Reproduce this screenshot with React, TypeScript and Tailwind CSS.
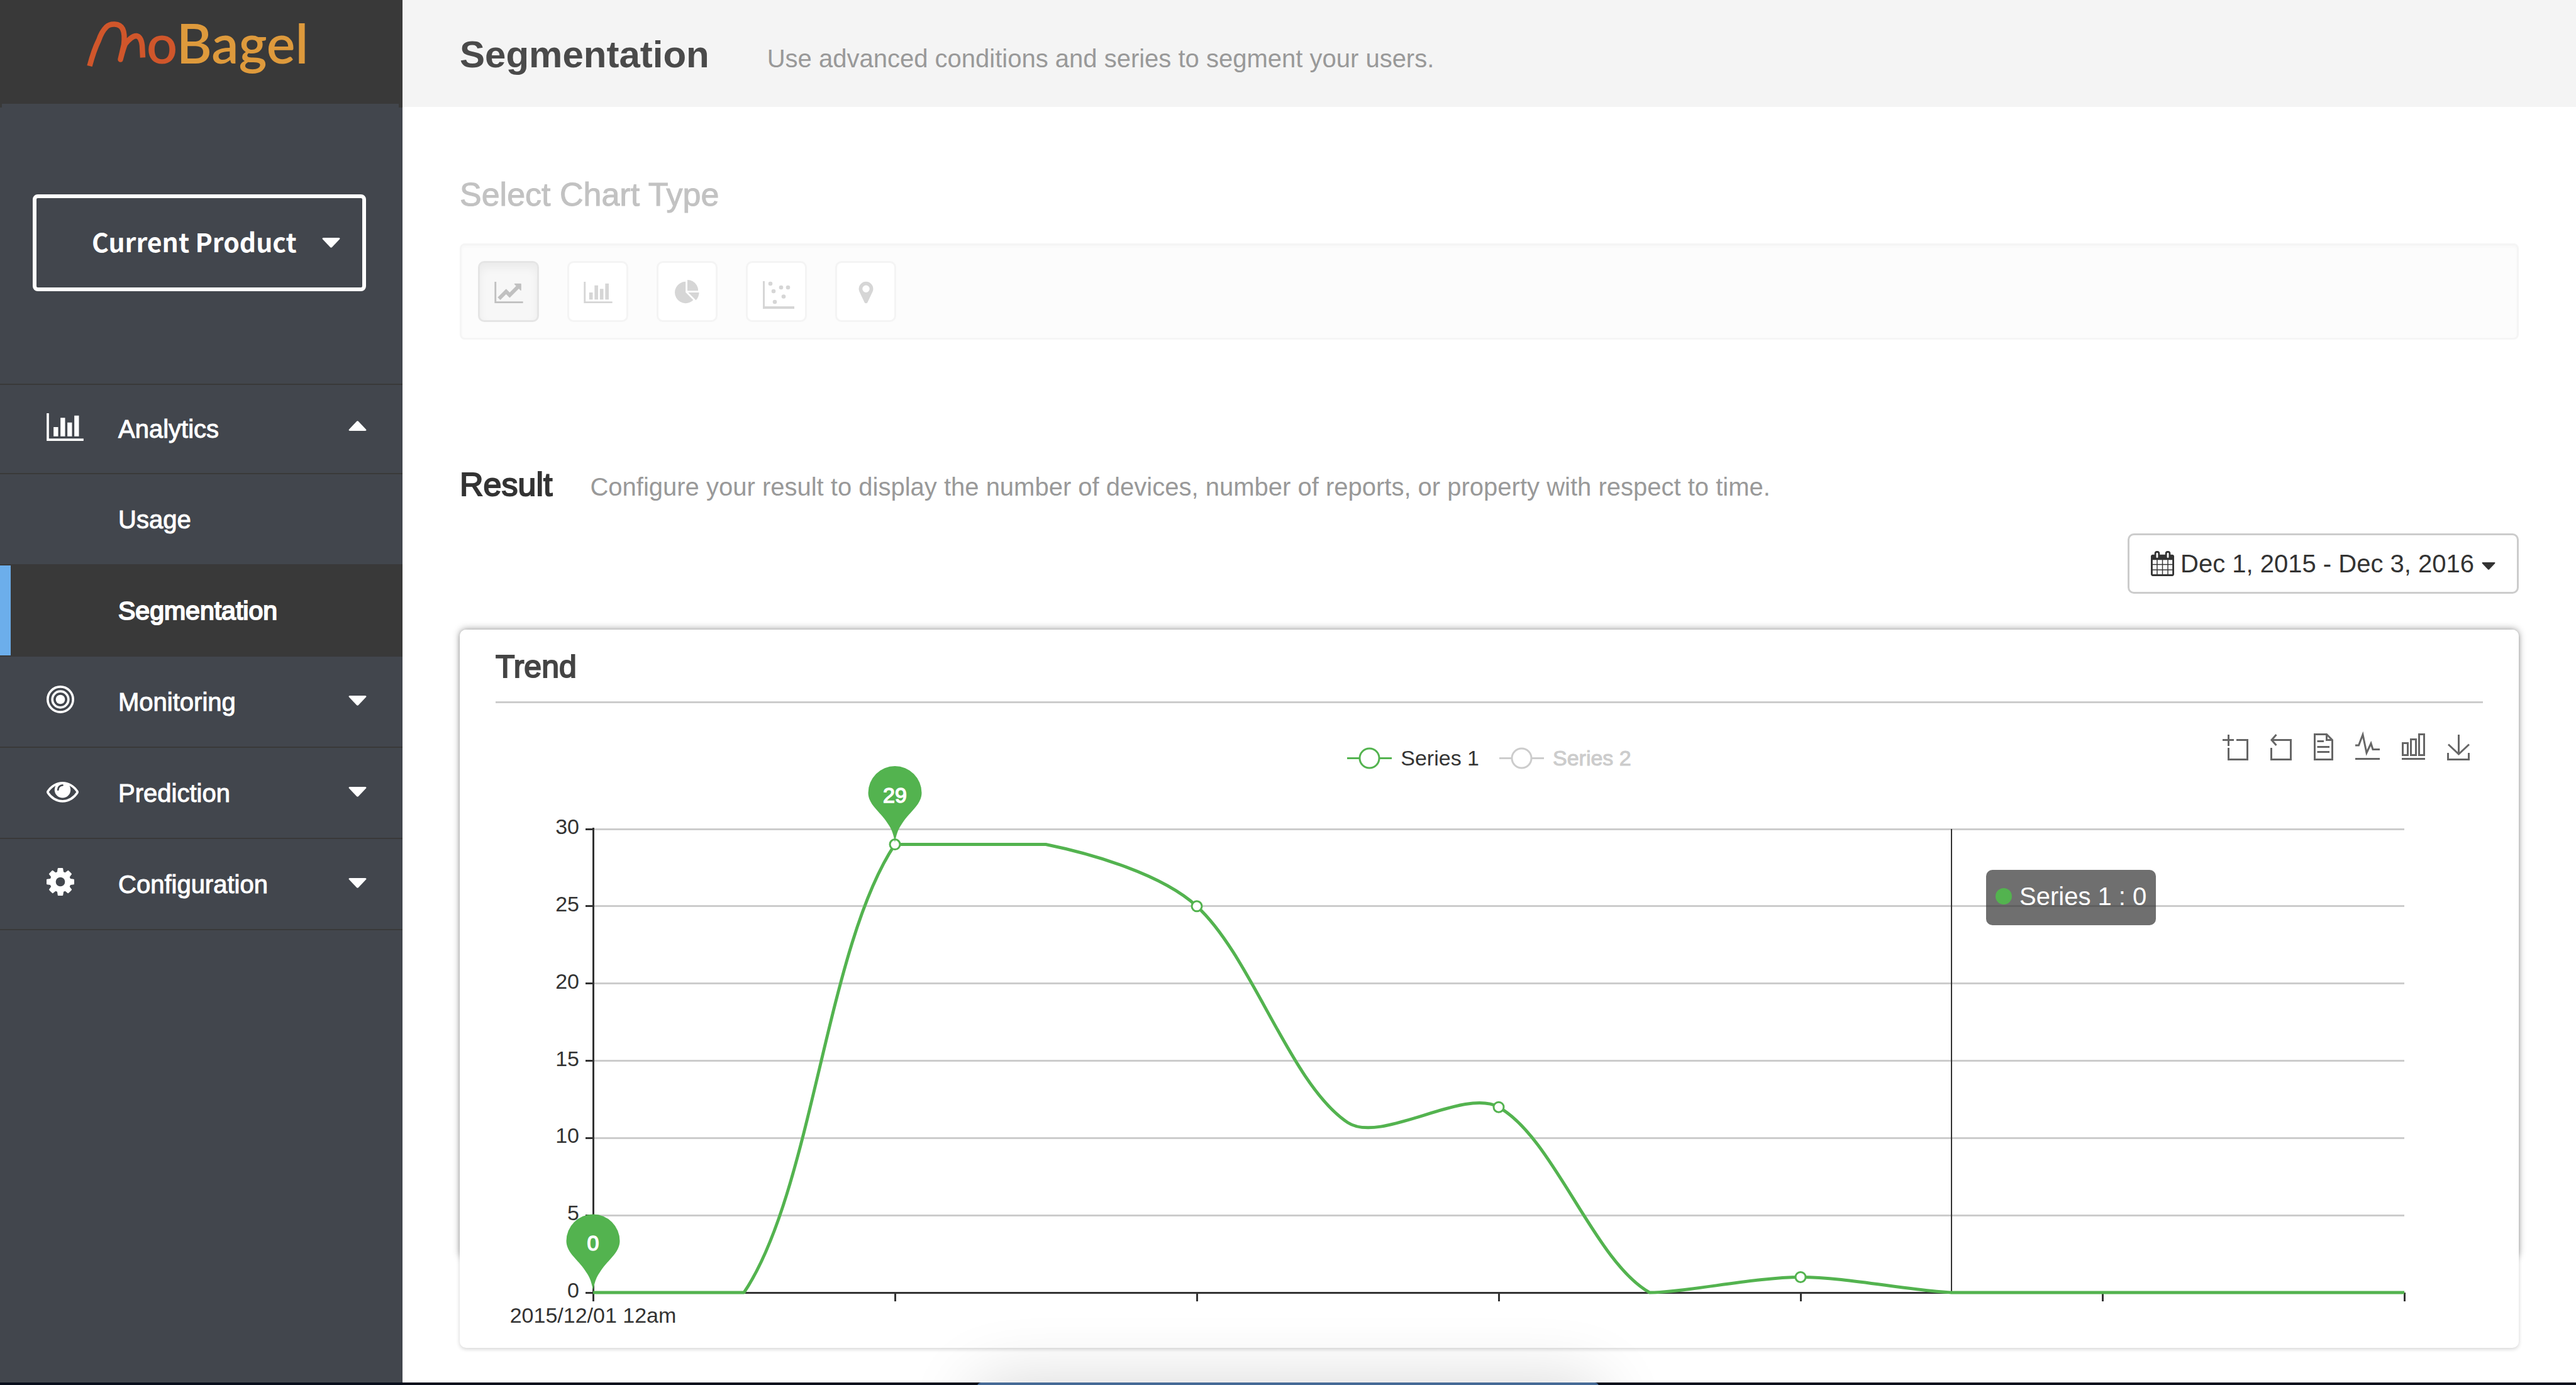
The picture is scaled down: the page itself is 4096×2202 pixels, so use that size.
import React from "react";

type IconProps = { className?: string };

function BarChartIcon({ className }: IconProps) {
  return (
    <svg viewBox="0 0 2048 1536" fill="currentColor" className={className} aria-hidden="true">
      <path d="M640 768v512h-256v-512h256zM1024 256v1024h-256v-1024h256zM2048 1408v128h-2048v-1536h128v1408h1920zM1408 512v768h-256v-768h256zM1792 128v1152h-256v-1152h256z" />
    </svg>
  );
}

function LineChartIcon({ className }: IconProps) {
  return (
    <svg viewBox="0 0 2048 1536" fill="currentColor" className={className} aria-hidden="true">
      <path d="M2048 1408v128h-2048v-1536h128v1408h1920zM1920 160v435q0 21-19.5 29.5t-35.5-7.5l-121-121-633 633q-10 10-23 10t-23-10l-233-233-416 416-192-192 585-585q10-10 23-10t23 10l233 233 464-464-121-121q-16-16-7.5-35.5t29.5-19.5h435q14 0 23 9t9 23z" />
    </svg>
  );
}

function PieChartIcon({ className }: IconProps) {
  return (
    <svg viewBox="0 0 1792 1792" fill="currentColor" className={className} aria-hidden="true">
      <path d="M768 890l546 546q-106 108-247.5 168t-298.5 60q-209 0-385.5-103t-279.5-279.5-103-385.5 103-385.5 279.5-279.5 385.5-103v762zM955 896h773q0 157-60 298.5t-168 247.5zM1664 768h-768v-768q209 0 385.5 103t279.5 279.5 103 385.5z" />
    </svg>
  );
}

function ScatterIcon({ className }: IconProps) {
  return (
    <svg viewBox="0 0 50 44" fill="currentColor" className={className} aria-hidden="true">
      <path d="M0 0h3v40h47v4H0z" />
      <circle cx="12" cy="4" r="3.3" />
      <circle cx="17" cy="16" r="3.3" />
      <circle cx="19" cy="33" r="3.3" />
      <circle cx="29" cy="10" r="3.3" />
      <circle cx="40" cy="10" r="3.3" />
      <circle cx="33" cy="24.5" r="3.3" />
    </svg>
  );
}

function MarkerIcon({ className }: IconProps) {
  return (
    <svg viewBox="0 0 1792 1792" fill="currentColor" className={className} aria-hidden="true">
      <path d="M1152 640q0-106-75-181t-181-75-181 75-75 181 75 181 181 75 181-75 75-181zM1408 640q0 109-33 179l-364 774q-16 33-47.5 52t-67.5 19-67.5-19-46.5-52l-365-774q-33-70-33-179 0-212 150-362t362-150 362 150 150 362z" />
    </svg>
  );
}

function BullseyeIcon({ className }: IconProps) {
  return (
    <svg viewBox="0 0 1536 1536" fill="none" stroke="currentColor" strokeWidth="128" className={className} aria-hidden="true">
      <circle cx="768" cy="768" r="256" fill="currentColor" stroke="none" />
      <circle cx="768" cy="768" r="448" />
      <circle cx="768" cy="768" r="704" />
    </svg>
  );
}

function EyeIcon({ className }: IconProps) {
  return (
    <svg viewBox="0 0 1792 1792" fill="currentColor" className={className} aria-hidden="true">
      <path d="M1664 960q-152-236-381-353 61 104 61 225 0 185-131.5 316.5t-316.5 131.5-316.5-131.5-131.5-316.5q0-121 61-225-229 117-381 353 133 205 333.5 326.5t434.5 121.5 434.5-121.5 333.5-326.5zM944 576q0-20-14-34t-34-14q-125 0-214.5 89.5t-89.5 214.5q0 20 14 34t34 14 34-14 14-34q0-86 61-147t147-61q20 0 34-14t14-34zM1792 960q0 34-20 69-140 230-376.5 368.5t-499.5 138.5-499.5-139-376.5-368q-20-35-20-69t20-69q140-229 376.5-368t499.5-139 499.5 139 376.5 368q20 35 20 69z" />
    </svg>
  );
}

function CogIcon({ className }: IconProps) {
  return (
    <svg viewBox="128 128 1536 1536" fill="currentColor" className={className} aria-hidden="true">
      <path d="M1152 896q0-106-75-181t-181-75-181 75-75 181 75 181 181 75 181-75 75-181zM1664 787v222q0 12-8 23t-20 13l-185 28q-19 54-39 91 35 50 107 138 10 12 10 25t-9 23q-27 37-99 108t-94 71q-12 0-26-9l-138-108q-44 23-91 38-16 136-29 186-7 28-36 28h-222q-14 0-24.5-8.5t-11.5-21.5l-28-184q-49-16-90-37l-141 107q-10 9-25 9-14 0-25-11-126-114-165-168-7-10-7-23 0-12 8-23 15-21 51-66.5t54-70.5q-27-50-41-99l-183-27q-13-2-21-12.5t-8-23.5v-222q0-12 8-23t19-13l186-28q14-46 39-92-40-57-107-138-10-12-10-24 0-10 9-23 26-36 98.5-107.5t94.5-71.5q13 0 26 10l138 107q44-23 91-38 16-136 29-186 7-28 36-28h222q14 0 24.5 8.5t11.5 21.5l28 184q49 16 90 37l142-107q9-9 24-9 13 0 25 10 129 119 165 170 7 8 7 22 0 12-8 23-15 21-51 66.5t-54 70.5q26 50 41 98l183 28q13 2 21 12.5t8 23.5z" />
    </svg>
  );
}

function CalendarIcon({ className }: IconProps) {
  return (
    <svg viewBox="64 0 1664 1792" fill="currentColor" className={className} aria-hidden="true">
      <path d="M192 1664h288v-288h-288v288zM544 1664h320v-288h-320v288zM192 1312h288v-320h-288v320zM544 1312h320v-320h-320v320zM192 928h288v-288h-288v288zM928 1664h320v-288h-320v288zM544 928h320v-288h-320v288zM1312 1664h288v-288h-288v288zM928 1312h320v-320h-320v320zM576 448v-288q0-13-9.5-22.5t-22.5-9.5h-64q-13 0-22.5 9.5t-9.5 22.5v288q0 13 9.5 22.5t22.5 9.5h64q13 0 22.5-9.5t9.5-22.5zM1312 1312h288v-320h-288v320zM928 928h320v-288h-320v288zM1312 928h288v-288h-288v288zM1344 448v-288q0-13-9.5-22.5t-22.5-9.5h-64q-13 0-22.5 9.5t-9.5 22.5v288q0 13 9.5 22.5t22.5 9.5h64q13 0 22.5-9.5t9.5-22.5zM1728 384v1280q0 52-38 90t-90 38h-1408q-52 0-90-38t-38-90v-1280q0-52 38-90t90-38h128v-96q0-66 47-113t113-47h64q66 0 113 47t47 113v96h384v-96q0-66 47-113t113-47h64q66 0 113 47t47 113v96h128q52 0 90 38t38 90z" />
    </svg>
  );
}

function Caret({ className }: IconProps) {
  return (
    <svg viewBox="0 0 28 16" fill="currentColor" className={className} aria-hidden="true">
      <path d="M1.500 0h25q2.500 0.500 0.800 2.600L15.500 15q-1.500 1.400-3 0L0.700 2.600Q-1 0.500 1.500 0z" />
    </svg>
  );
}

function Logo() {
  return (
    <a href="#home" aria-label="MoBagel" className="block pl-[136px]">
      <svg viewBox="136 0 400 150" className="block h-[150px] w-[400px]" aria-hidden="true">
        <path
          d="M142.500 105C147 88 152 74 157 64C160 55 164 48 169 43C175 37 190 36 195 46C198 52 198 62 197 71L191.500 94.500C194 85 196 77 199 70C204 64 210 57 217 57C223 58 225 64 226 72L227 91.500"
          fill="none"
          stroke="#d0562b"
          strokeWidth="8.500"
          strokeLinejoin="round"
        />
        <text x="233" y="101" className="font-['Lato',sans-serif] text-[86px] font-semibold" fill="#de9a3c">
          <tspan fill="#d0562b">o</tspan>Bagel
        </text>
      </svg>
    </a>
  );
}

const navRow =
  "flex h-full w-full items-center pl-[74px] pr-[57px] text-left text-[40px] leading-[48px] text-white [-webkit-text-stroke:1px_white]";

function NavGroup({ label, icon, open, first }: { label: string; icon: React.ReactNode; open?: boolean; first?: boolean }) {
  return (
    <li className={first ? "h-[142px] border-t-2 border-[#393939]" : "h-[145px] border-t-2 border-[#393939]"}>
      <button type="button" aria-expanded={!!open} className={navRow}>
        <span className="w-[114px] pb-[7px]">{icon}</span>
        <span className="flex-1">{label}</span>
        <Caret className={open ? "mb-2.5 h-4 w-[29px] rotate-180" : "mb-1 h-4 w-[29px]"} />
      </button>
    </li>
  );
}

function NavLeaf({ label, active }: { label: string; active?: boolean }) {
  return (
    <li className={active ? "h-[145px] border-t-2 border-[#393939] bg-[#393939]" : "h-[145px] border-t-2 border-[#393939]"}>
      <a
        href={"#" + label.toLowerCase()}
        aria-current={active ? "page" : undefined}
        className={
          active
            ? "flex h-full items-center border-l-[17px] border-[#6caeeb] pl-[171px] text-[41px] leading-[48px] text-white [-webkit-text-stroke:2px_white]"
            : "flex h-full items-center pl-[188px] text-[40px] leading-[48px] text-white [-webkit-text-stroke:1px_white]"
        }
      >
        {label}
      </a>
    </li>
  );
}

function Sidebar() {
  return (
    <aside className="w-[640px] shrink-0 bg-[#42464d]">
      <div className="h-[165px] bg-[#393939]">
        <Logo />
      </div>
      <div className="h-1.5 border-l-[3px] border-r-[6px] border-[#393939]" />
      <button
        type="button"
        className="ml-[52px] mr-[58px] mt-[138px] flex h-[154px] w-[530px] items-center justify-between rounded-lg border-[6px] border-white pl-[88px] pr-[35px] text-[41px] font-bold leading-[48px] text-white font-['Noto_Sans_CJK_SC',sans-serif]"
      >
        <span className="pb-1.5">Current Product</span>
        <Caret className="h-4 w-[29px]" />
      </button>
      <nav aria-label="Main">
        <ul className="mt-[147px] border-b-2 border-[#393939]">
          <NavGroup first open label="Analytics" icon={<BarChartIcon className="h-11 w-[59px]" />} />
          <NavLeaf label="Usage" />
          <NavLeaf active label="Segmentation" />
          <NavGroup label="Monitoring" icon={<BullseyeIcon className="size-11" />} />
          <NavGroup label="Prediction" icon={<EyeIcon className="size-[51px]" />} />
          <NavGroup label="Configuration" icon={<CogIcon className="size-11" />} />
        </ul>
      </nav>
    </aside>
  );
}

const chartTypes = [
  { label: "Line chart", icon: <LineChartIcon className="h-[34px] w-[46px]" />, active: true },
  { label: "Bar chart", icon: <BarChartIcon className="h-[34px] w-[46px]" /> },
  { label: "Pie chart", icon: <PieChartIcon className="size-10" /> },
  { label: "Scatter chart", icon: <ScatterIcon className="ml-1.5 mt-2 h-11 w-[50px]" /> },
  { label: "Map", icon: <MarkerIcon className="size-10" /> },
];

function ChartTypePicker() {
  return (
    <section>
      <h2 className="text-[52px] leading-[60px] text-[#c2c2c2] [-webkit-text-stroke:1px_#c2c2c2]">Select Chart Type</h2>
      <div className="mt-12 flex gap-[45px] rounded-lg border-[3px] border-[#f5f5f5] bg-[#fcfcfc] px-[26px] py-[25px] shadow-[inset_0_3px_4px_rgba(0,0,0,0.02)]">
        {chartTypes.map((t) => (
          <button
            key={t.label}
            type="button"
            aria-label={t.label}
            aria-pressed={!!t.active}
            className={
              t.active
                ? "flex size-[97px] items-center justify-center rounded-[10px] border-[3px] border-[#e5e5e5] bg-[#f7f7f7] pt-0.5 text-[#c0c0c0] shadow-[inset_0_8px_14px_rgba(0,0,0,0.05)]"
                : "flex size-[97px] items-center justify-center rounded-[10px] border-[3px] border-[#f4f4f4] bg-white pt-0.5 text-[#d6d6d6]"
            }
          >
            {t.icon}
          </button>
        ))}
      </div>
    </section>
  );
}

function ToolIcon({ label, box, className, children }: { label: string; box: string; className: string; children: React.ReactNode }) {
  return (
    <button type="button" aria-label={label}>
      <svg viewBox={box} fill="none" stroke="#666" strokeWidth="3" className={className} aria-hidden="true">
        {children}
      </svg>
    </button>
  );
}

function Toolbox() {
  return (
    <div className="flex gap-[35px] justify-self-end pr-[21px]">
      <ToolIcon label="Area zoom" box="0 0 42 48" className="block h-12 w-[42px]">
        <path d="M10.500 5V23M1 13.500H19M23 13.500H40.500V44.500H10.500V26" />
      </ToolIcon>
      <ToolIcon label="Restore zoom" box="0 0 34 48" className="block h-12 w-[34px]">
        <path d="M1.500 26V44.500H32.500V13.500H2M9.500 5L2 13.500L9.500 22" />
      </ToolIcon>
      <ToolIcon label="Data view" box="0 0 31 48" className="block h-12 w-[31px]">
        <path d="M1.500 4.500H20.500L29.500 13.500V44.500H1.500ZM20.500 4.500V13.500H29.500M5.500 15.500H16M5.500 24.500H25M5.500 32.500H25" />
      </ToolIcon>
      <ToolIcon label="Line view" box="0 0 39 48" className="block h-12 w-[39px]">
        <path d="M0 22H5.500L12 5L18 34L25 19L28 28.500H39M0 43.500H39" />
      </ToolIcon>
      <ToolIcon label="Bar view" box="0 0 37 48" className="block h-12 w-[37px]">
        <path d="M1.500 18.500H9.500V37.500H1.500ZM14.500 12.500H22.500V37.500H14.500ZM27.500 4.500H35.500V37.500H27.500ZM0 43.500H37" />
      </ToolIcon>
      <ToolIcon label="Save as image" box="0 0 36 48" className="block h-12 w-9">
        <path d="M18.500 5V36M2 20.500L18.500 36L35 20.500M1.500 34V44.500H34.500V34" />
      </ToolIcon>
    </div>
  );
}

function Legend() {
  return (
    <div className="mt-[22px] flex gap-8 text-[34px] leading-10">
      <button type="button" aria-pressed="true" className="flex items-center gap-3.5 text-[#333]">
        <svg viewBox="0 0 71 36" className="h-9 w-[71px]" fill="none" stroke="#53b34f" strokeWidth="3" aria-hidden="true">
          <path d="M0 18.500H19M52 18.500H71" />
          <circle cx="35.500" cy="18.500" r="15.500" />
        </svg>
        Series 1
      </button>
      <button type="button" aria-pressed="false" className="flex items-center gap-3.5 text-[#ccc] [-webkit-text-stroke:1px_#ccc]">
        <svg viewBox="0 0 71 36" className="h-9 w-[71px]" fill="none" stroke="#ccc" strokeWidth="3" aria-hidden="true">
          <path d="M0 18.500H19M52 18.500H71" />
          <circle cx="35.500" cy="18.500" r="15.500" />
        </svg>
        Series 2
      </button>
    </div>
  );
}

const LEFT = 155;
const STEP = 240;
const TOP = 91;
const BOTTOM = 828;
const values = [0, 0, 29, 29, 25, 11, 12, 0, 1, 0, 0, 0, 0];
const RIGHT = LEFT + STEP * (values.length - 1);
const yOf = (v: number) => BOTTOM - (v * (BOTTOM - TOP)) / 30;
const points = values.map((v, i) => [LEFT + i * STEP, yOf(v)]);

/** Cubic path through the points, with control points kept inside the data's own range. */
function smoothPath(pts: number[][], smooth: number) {
  const minY = Math.min(...pts.map((p) => p[1]));
  const maxY = Math.max(...pts.map((p) => p[1]));
  const clamp = (y: number) => Math.max(minY, Math.min(maxY, y));
  const controls = pts.map((p, i) => {
    const a = pts[i - 1];
    const b = pts[i + 1];
    if (!a || !b) return [p, p];
    const d0 = Math.hypot(p[0] - a[0], p[1] - a[1]);
    const d1 = Math.hypot(p[0] - b[0], p[1] - b[1]);
    const vx = (b[0] - a[0]) * smooth;
    const vy = (b[1] - a[1]) * smooth;
    const k0 = d0 / (d0 + d1);
    const k1 = d1 / (d0 + d1);
    return [
      [p[0] - vx * k0, clamp(p[1] - vy * k0)],
      [p[0] + vx * k1, clamp(p[1] + vy * k1)],
    ];
  });
  return pts
    .map((p, i) => (i === 0 ? `M${p[0]} ${p[1]}` : `C${controls[i - 1][1].join(" ")} ${controls[i][0].join(" ")} ${p.join(" ")}`))
    .join("");
}

function Pin({ x, y, label }: { x: number; y: number; label: string }) {
  return (
    <g transform={`translate(${x} ${y})`}>
      <path
        d="M0 -3C-2 -15 -5 -24 -10 -31C-16 -41 -23 -48 -30 -56C-38 -65 -42.500 -73 -42.500 -82A42.500 42.500 0 0 1 42.500 -82C42.500 -73 38 -65 30 -56C23 -48 16 -41 10 -31C5 -24 2 -15 0 -3Z"
        fill="#53b34f"
      />
      <text y="-67" textAnchor="middle" fill="#fff" stroke="#fff" strokeWidth="1.500" className="text-[34px]">
        {label}
      </text>
    </g>
  );
}

function TrendChart() {
  return (
    <div className="relative">
      <svg viewBox="0 0 3160 886" className="block h-auto w-full overflow-visible" role="img" aria-label="Trend of Series 1">
        <g stroke="#ccc" strokeWidth="3" shapeRendering="crispEdges">
          {[5, 10, 15, 20, 25, 30].map((v) => (
            <path key={v} d={`M${LEFT} ${yOf(v)}H${RIGHT}`} />
          ))}
        </g>
        <g fill="none" stroke="#333" strokeWidth="3" shapeRendering="crispEdges">
          {[0, 5, 10, 15, 20, 25, 30].map((v) => (
            <path key={v} d={`M${LEFT - 12} ${yOf(v)}H${LEFT}`} />
          ))}
          <path d={`M${LEFT} ${TOP - 2}V${BOTTOM}H${RIGHT}`} />
          {points
            .filter((_, i) => i % 2 === 0)
            .map(([x]) => (
              <path key={x} d={`M${x} ${BOTTOM}v14`} />
            ))}
          <path d={`M${LEFT + 9 * STEP} ${TOP}V${BOTTOM}`} strokeWidth="2" />
        </g>
        {[0, 5, 10, 15, 20, 25, 30].map((v) => (
          <text key={v} x={LEFT - 22} y={yOf(v) + 8} textAnchor="end" fill="#333" className="text-[34px]">
            {v}
          </text>
        ))}
        <text x={LEFT} y="876" textAnchor="middle" fill="#333" className="text-[34px]">
          2015/12/01 12am
        </text>
        <path d={smoothPath(points, 0.3)} fill="none" stroke="#53b34f" strokeWidth="5" strokeLinejoin="bevel" />
        {[2, 4, 6, 8].map((i) => (
          <circle key={i} cx={points[i][0]} cy={points[i][1]} r="8" fill="#fff" stroke="#53b34f" strokeWidth="3" />
        ))}
        <Pin x={points[0][0]} y={points[0][1]} label="0" />
        <Pin x={points[2][0]} y={points[2][1]} label="29" />
      </svg>
      <div className="absolute left-[75%] top-[156px] flex h-[88px] items-center gap-3 whitespace-nowrap rounded-[10px] bg-[#323232]/70 px-[15px] pb-1 text-[40px] leading-[48px] text-white">
        <span className="size-[26px] rounded-full bg-[#53b34f]" />
        Series 1 : 0
      </div>
    </div>
  );
}

function Result() {
  return (
    <section className="mt-[200px]">
      <div className="flex items-baseline gap-[60px]">
        <h2 className="text-[52px] leading-[60px] text-[#333] [-webkit-text-stroke:2px_#333]">Result</h2>
        <p className="text-[40px] leading-[48px] text-[#999]">
          Configure your result to display the number of devices, number of reports, or property with respect to time.
        </p>
      </div>
      <button
        type="button"
        aria-haspopup="true"
        className="ml-auto mt-12 flex h-24 items-center rounded-[10px] border-[3px] border-[#ccc] bg-white px-[34px] text-[40px] leading-[48px] text-[#333]"
      >
        <CalendarIcon className="mb-px mr-2.5 h-10 w-[37px]" />
        Dec 1, 2015 - Dec 3, 2016
        <Caret className="ml-3 mt-2 h-3 w-[22px]" />
      </button>
      <div className="relative mt-[57px]">
        <div className="absolute inset-x-0 bottom-[142px] top-0 rounded-[10px] shadow-[0_-1px_12px_rgba(0,0,0,0.36)]" />
        <div className="relative rounded-[10px] bg-white px-[57px] pb-[30px] pt-[29px] shadow-[0_2px_6px_rgba(0,0,0,0.18)]">
          <h3 className="border-b-[3px] border-[#ccc] pb-[25px] text-[50px] leading-[60px] text-[#444] [-webkit-text-stroke:2px_#444]">Trend</h3>
          <div className="mt-[45px] grid h-16 grid-cols-[1fr_auto_1fr] items-start">
            <span />
            <Legend />
            <Toolbox />
          </div>
          <TrendChart />
        </div>
      </div>
    </section>
  );
}

export default function App() {
  return (
    <div className="relative flex min-h-screen overflow-hidden bg-white font-['Liberation_Sans',Arial,sans-serif]">
      <Sidebar />
      <div className="min-w-0 flex-1">
        <header className="flex items-baseline gap-[92px] bg-[#f4f4f4] px-[91px] pb-[51px] pt-[55px]">
          <h1 className="text-[60px] font-bold leading-[64px] text-[#4a4a4a]">Segmentation</h1>
          <p className="text-[40px] leading-[48px] text-[#999]">Use advanced conditions and series to segment your users.</p>
        </header>
        <main className="px-[91px] pt-[109px]">
          <ChartTypePicker />
          <Result />
        </main>
      </div>
      <div className="pointer-events-none absolute inset-x-0 bottom-0 h-1 bg-[#0a0f1c]">
        <div className="mx-auto h-[200px] w-[988px] rounded-t-md bg-[#466a96] shadow-[0_0_110px_rgba(0,0,0,0.16)]" />
      </div>
    </div>
  );
}
